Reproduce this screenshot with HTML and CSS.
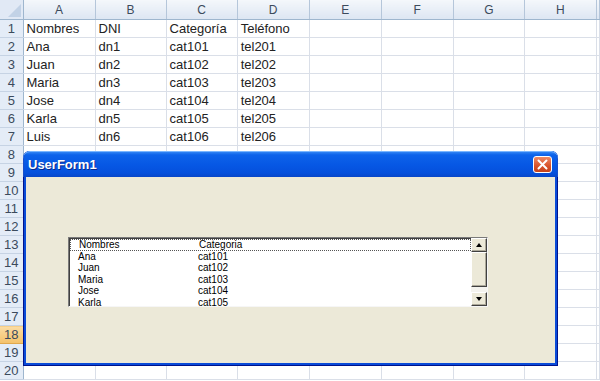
FILE: index.html
```html
<!DOCTYPE html>
<html>
<head>
  <meta charset="utf-8" />
  <link rel="stylesheet" href="styles.css">
</head>
<body>
  <table class="hoja">
    <colgroup>
      <col class="c-num"><col class="c72"><col class="c71"><col class="c71"><col class="c72"><col class="c72"><col class="c72"><col class="c71"><col class="c72"><col class="c-fin">
    </colgroup>
    <thead>
      <tr>
        <th class="esquina"><span class="tri"></span></th>
        <th>A</th><th>B</th><th>C</th><th>D</th><th>E</th><th>F</th><th>G</th><th>H</th><th></th>
      </tr>
    </thead>
    <tbody>
      <tr><th>1</th><td>Nombres</td><td>DNI</td><td>Categoría</td><td>Teléfono</td><td></td><td></td><td></td><td></td><td></td></tr>
      <tr><th>2</th><td>Ana</td><td>dn1</td><td>cat101</td><td>tel201</td><td></td><td></td><td></td><td></td><td></td></tr>
      <tr><th>3</th><td>Juan</td><td>dn2</td><td>cat102</td><td>tel202</td><td></td><td></td><td></td><td></td><td></td></tr>
      <tr><th>4</th><td>Maria</td><td>dn3</td><td>cat103</td><td>tel203</td><td></td><td></td><td></td><td></td><td></td></tr>
      <tr><th>5</th><td>Jose</td><td>dn4</td><td>cat104</td><td>tel204</td><td></td><td></td><td></td><td></td><td></td></tr>
      <tr><th>6</th><td>Karla</td><td>dn5</td><td>cat105</td><td>tel205</td><td></td><td></td><td></td><td></td><td></td></tr>
      <tr><th>7</th><td>Luis</td><td>dn6</td><td>cat106</td><td>tel206</td><td></td><td></td><td></td><td></td><td></td></tr>
      <tr><th>8</th><td></td><td></td><td></td><td></td><td></td><td></td><td></td><td></td><td></td></tr>
      <tr><th>9</th><td></td><td></td><td></td><td></td><td></td><td></td><td></td><td></td><td></td></tr>
      <tr><th>10</th><td></td><td></td><td></td><td></td><td></td><td></td><td></td><td></td><td></td></tr>
      <tr><th>11</th><td></td><td></td><td></td><td></td><td></td><td></td><td></td><td></td><td></td></tr>
      <tr><th>12</th><td></td><td></td><td></td><td></td><td></td><td></td><td></td><td></td><td></td></tr>
      <tr><th>13</th><td></td><td></td><td></td><td></td><td></td><td></td><td></td><td></td><td></td></tr>
      <tr><th>14</th><td></td><td></td><td></td><td></td><td></td><td></td><td></td><td></td><td></td></tr>
      <tr><th>15</th><td></td><td></td><td></td><td></td><td></td><td></td><td></td><td></td><td></td></tr>
      <tr><th>16</th><td></td><td></td><td></td><td></td><td></td><td></td><td></td><td></td><td></td></tr>
      <tr><th>17</th><td></td><td></td><td></td><td></td><td></td><td></td><td></td><td></td><td></td></tr>
      <tr><th class="activa">18</th><td></td><td></td><td></td><td></td><td></td><td></td><td></td><td></td><td></td></tr>
      <tr><th>19</th><td></td><td></td><td></td><td></td><td></td><td></td><td></td><td></td><td></td></tr>
      <tr><th>20</th><td></td><td></td><td></td><td></td><td></td><td></td><td></td><td></td><td></td></tr>
    </tbody>
  </table>

  <div class="userform">
    <div class="titulo">
      <span class="titulo-texto">UserForm1</span>
      <span class="cerrar">
        <svg width="11" height="11" viewBox="0 0 11 11"><path d="M1.5 1.5 L9.5 9.5 M9.5 1.5 L1.5 9.5" stroke="#fff" stroke-width="2" stroke-linecap="round"/></svg>
      </span>
    </div>
    <div class="cuerpo">
      <div class="listbox">
        <div class="filas">
          <div class="fila cabecera"><span class="col1">Nombres</span><span>Categoria</span></div>
          <div class="fila"><span class="col1">Ana</span><span>cat101</span></div>
          <div class="fila"><span class="col1">Juan</span><span>cat102</span></div>
          <div class="fila"><span class="col1">Maria</span><span>cat103</span></div>
          <div class="fila"><span class="col1">Jose</span><span>cat104</span></div>
          <div class="fila"><span class="col1">Karla</span><span>cat105</span></div>
        </div>
        <div class="scroll">
          <div class="btn-scroll"><span class="flecha arriba"></span></div>
          <div class="thumb"></div>
          <div class="pista"></div>
          <div class="btn-scroll"><span class="flecha abajo"></span></div>
        </div>
      </div>
    </div>
  </div>
</body>
</html>
```

FILE: styles.css
```css
body {
  margin: 0;
  width: 600px;
  height: 381px;
  overflow: hidden;
  background: #fff;
  position: relative;
}
.hoja {
  border-collapse: collapse;
  table-layout: fixed;
  width: 600px;
  font-family: "Liberation Sans", Arial, sans-serif;
  font-size: 13px;
  color: #222;
}
.c-num { width: 23px; }
.c72 { width: 72px; }
.c71 { width: 71px; }
.c-fin { width: 3px; }
.hoja thead th {
  height: 19px;
  padding: 0;
  font-weight: normal;
  font-size: 12px;
  color: #3b4a5c;
  background: linear-gradient(#f4f7fb, #dde6f2);
  border-right: 1px solid #b5c6da;
  border-bottom: 1px solid #9eb6ce;
}
.hoja th.esquina {
  position: relative;
  background: #e1e9f5;
  border-right: 1px solid #9eb6ce;
}
.tri {
  position: absolute;
  right: 2px;
  bottom: 2px;
  width: 0;
  height: 0;
  border-left: 13px solid transparent;
  border-bottom: 13px solid #c2d2e6;
}
.hoja tbody th {
  height: 17px;
  padding: 0;
  font-weight: normal;
  color: #3b4a5c;
  background: #e4ecf7;
  border-right: 1px solid #9eb6ce;
  border-bottom: 1px solid #c6d3e4;
}
.hoja tbody th.activa {
  background: linear-gradient(#fbdca4, #f3c16a);
  border-bottom-color: #e0a84e;
}
.hoja td {
  height: 17px;
  padding: 0 0 0 3px;
  white-space: nowrap;
  overflow: hidden;
  border-right: 1px solid #dadfe8;
  border-bottom: 1px solid #dadfe8;
}
.hoja td:last-child {
  padding: 0;
}

/* formulario */
.userform {
  position: absolute;
  left: 23px;
  top: 151px;
  width: 535px;
  height: 215px;
  display: flex;
  flex-direction: column;
  box-sizing: border-box;
  border-radius: 7px 7px 0 0;
  background: #0a4bd8;
  padding: 0 3px 3px 3px;
  box-shadow: inset 0 0 0 1px #00138c;
}
.titulo {
  height: 26px;
  display: flex;
  align-items: center;
  justify-content: space-between;
  margin: 0 -3px;
  padding: 0 6px 0 5px;
  border-radius: 7px 7px 0 0;
  background: linear-gradient(#3d8ff7 0, #0d63ea 15%, #0657e4 55%, #0550dc 85%, #0846c8 100%);
  box-shadow: inset 0 1px 0 #7ab6ff, inset 1px 0 0 #1a4fc9, inset -1px 0 0 #1a4fc9;
}
.titulo-texto {
  font-family: "Liberation Sans", Arial, sans-serif;
  font-weight: bold;
  font-size: 13px;
  color: #fff;
  text-shadow: 1px 1px 0 #0a2a8c;
}
.cerrar {
  width: 17px;
  height: 15px;
  display: flex;
  align-items: center;
  justify-content: center;
  border: 1px solid #fff;
  border-radius: 3px;
  background: linear-gradient(#ef8a66, #d8522a 60%, #c4421c);
  margin-top: 1px;
}
.cuerpo {
  flex: 1;
  background: #ece9d8;
  padding: 60px 0 0 42px;
}

/* listbox */
.listbox {
  width: 420px;
  height: 70px;
  box-sizing: border-box;
  display: flex;
  background: #fff;
  border-top: 1px solid #7a7a7a;
  border-left: 1px solid #7a7a7a;
  border-right: 1px solid #f6f6f6;
  border-bottom: 1px solid #f6f6f6;
  box-shadow: inset 1px 1px 0 #404040;
}
.filas {
  flex: 1;
  overflow: hidden;
  padding: 1px 0 0 1px;
  font-family: "Liberation Sans", Arial, sans-serif;
  font-size: 10px;
  color: #000;
}
.fila {
  box-sizing: border-box;
  height: 11.5px;
  line-height: 11px;
  display: flex;
  padding-left: 8px;
}
.fila.cabecera {
  border: 1px dotted #555;
  line-height: 9px;
}
.col1 {
  width: 120px;
}
.scroll {
  width: 16px;
  display: flex;
  flex-direction: column;
  background: #f4f3ee;
}
.btn-scroll, .thumb {
  box-sizing: border-box;
  background: #ece9d8;
  border-top: 1px solid #fff;
  border-left: 1px solid #fff;
  border-right: 1px solid #404040;
  border-bottom: 1px solid #404040;
  box-shadow: inset -1px -1px 0 #aca899;
}
.btn-scroll {
  height: 14px;
  display: flex;
  align-items: center;
  justify-content: center;
}
.thumb {
  height: 35px;
}
.pista {
  flex: 1;
}
.flecha {
  width: 0;
  height: 0;
  border-left: 3px solid transparent;
  border-right: 3px solid transparent;
}
.arriba { border-bottom: 4px solid #000; }
.abajo { border-top: 4px solid #000; }
```
